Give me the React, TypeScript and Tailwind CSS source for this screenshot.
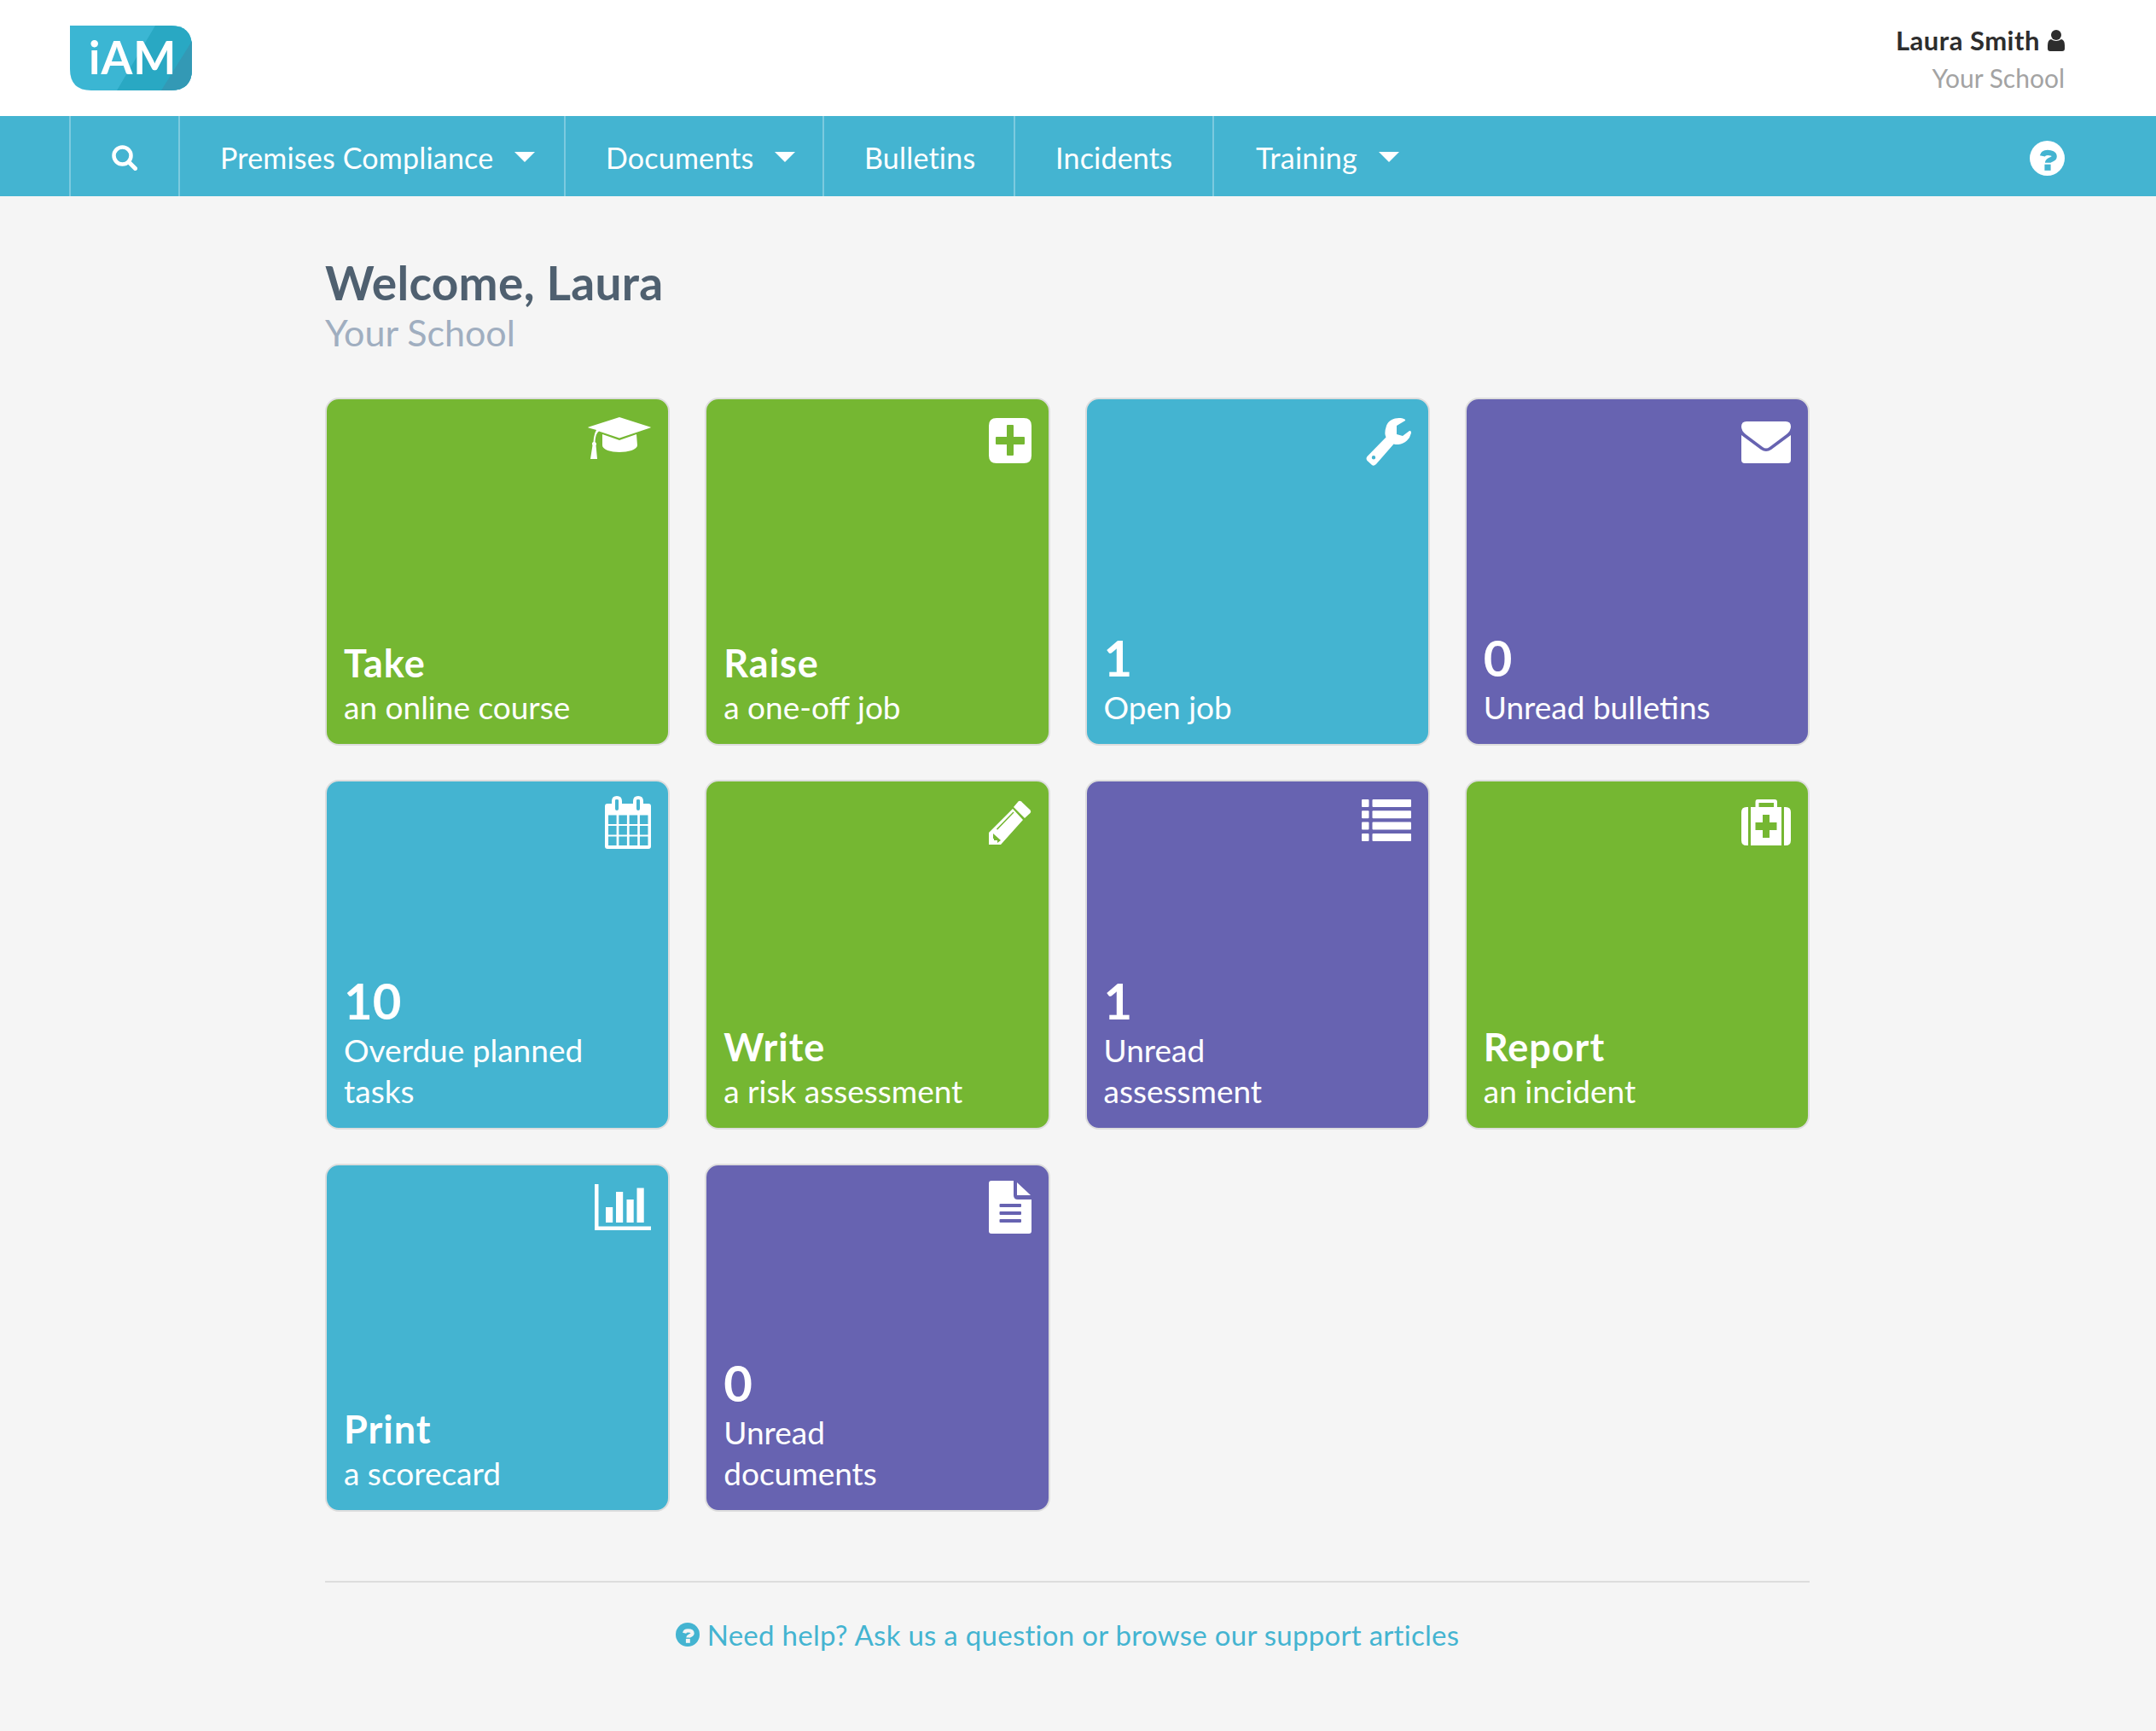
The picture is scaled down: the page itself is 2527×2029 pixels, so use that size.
import type { ReactNode } from "react";

const font = "font-['Lato','Open_Sans',sans-serif]";

function CapIcon() {
  return (
    <svg className="mt-[21px] h-[49px] w-[74px]" viewBox="0 0 74 49" fill="white">
      <path d="M37 0 L73 11.5 Q74.5 12 73 12.5 L37 24.5 L13 16.5 Q9 19 8.5 29 Q11 31 9.5 33 L11 49 H3 L5.5 33 Q4 30 6.5 29 Q7 20 10 15 L1 12.5 Q-0.5 12 1 11.5 Z" />
      <path d="M17 20 L37 27 L57 20 L58 33 C58 38 47 41 37 41 C27 41 17 38 17 33 Z" />
    </svg>
  );
}

function PlusIcon() {
  return (
    <svg className="mt-[22px] h-[53px] w-[50px]" viewBox="0 0 50 53" fill="white">
      <path
        fillRule="evenodd"
        d="M9 0 H41 Q50 0 50 9 V44 Q50 53 41 53 H9 Q0 53 0 44 V9 Q0 0 9 0 Z M21 9 V22 H9 Q8 22 8 23 V30 Q8 31 9 31 H21 V43 Q21 44 22 44 H28 Q29 44 29 43 V31 H41 Q42 31 42 30 V23 Q42 22 41 22 H29 V9 Q29 8 28 8 H22 Q21 8 21 9 Z"
      />
    </svg>
  );
}

function WrenchIcon() {
  return (
    <svg className="mt-[22px] h-[56px] w-[53px]" viewBox="0 0 53 56" fill="white">
      <path
        fillRule="evenodd"
        d="M46 3 L36 9 L36 19 L43 21 L51 15 Q53 14.5 53 17 A16.5 16.5 0 0 1 38 31 Q34 31 32.5 30.5 L12 54 Q9 57 7 55 L1.5 50 Q-0.5 47.5 1.5 45 L23.5 22.5 Q21 18 24 9 C27 1 38 -2 45.5 1.5 Q46.5 2.4 46 3 Z M9 44 A2.2 2.2 0 1 0 9 48.4 A2.2 2.2 0 1 0 9 44 Z"
      />
    </svg>
  );
}

function EnvelopeIcon() {
  return (
    <svg className="mt-[26px] h-[49px] w-[58px]" viewBox="0 0 58 49" fill="white">
      <path d="M6 0 H52 Q58 0 58 6 Q58 11 53 15 L33 30 Q29 33 25 30 L5 15 Q0 11 0 6 Q0 0 6 0 Z" />
      <path d="M0 16 L23 33 Q29 37 35 33 L58 16 V45 Q58 49 54 49 H4 Q0 49 0 45 Z" />
    </svg>
  );
}

function CalendarIcon() {
  const cells: string[] = [];
  [22.5, 35, 47.5].forEach((y) => {
    [4, 16.3, 28.6, 40.9].forEach((x) => {
      cells.push(`M${x} ${y} h9.6 v10.5 h-9.6 Z`);
    });
  });
  return (
    <svg className="mt-[17px] h-[62px] w-[54px]" viewBox="0 0 54 62" fill="white">
      <path
        fillRule="evenodd"
        d={`M3 9 H8 V6 Q8 0 14 0 Q20 0 20 6 V9 H33 V6 Q33 0 39 0 Q45 0 45 6 V9 H51 Q54 9 54 12 V59 Q54 62 51 62 H3 Q0 62 0 59 V12 Q0 9 3 9 Z M12 5 V15 Q12 17 14 17 Q16 17 16 15 V5 Q16 4 14 4 Q12 4 12 5 Z M37 5 V15 Q37 17 39 17 Q41 17 41 15 V5 Q41 4 39 4 Q37 4 37 5 Z ${cells.join(" ")}`}
      />
    </svg>
  );
}

function PencilIcon() {
  return (
    <svg className="mt-[22px] h-[53px] w-[50px]" viewBox="0 0 50 53" fill="white">
      <path d="M29 8 L34.5 1.5 Q36 0 38 1.5 L48.5 11.5 Q50 13.5 48.5 15 L42 21 Z" />
      <path
        fillRule="evenodd"
        d="M28 10 L40 23 L14 52 H0 V38 Z M9 33.5 L10 34.8 L29.5 14.5 L28.5 13.5 Z M5 39 L14 47 L10 50 V47 H6 V45 H5 Z"
      />
    </svg>
  );
}

function ListIcon() {
  return (
    <svg className="mt-[21px] h-[49px] w-[58px]" viewBox="0 0 58 49" fill="white">
      {[0, 13.3, 26.6, 40].map((y) => (
        <g key={y}>
          <rect x="0" y={y} width="8.5" height="9" rx="1" />
          <rect x="12.5" y={y} width="45.5" height="9" rx="1" />
        </g>
      ))}
    </svg>
  );
}

function MedkitIcon() {
  return (
    <svg className="mt-[21px] h-[54px] w-[58px]" viewBox="0 0 58 54" fill="white">
      <path
        fillRule="evenodd"
        d="M19 0 H39 Q42 0 42 3 V9 H47 V54 H11 V9 H16.5 V3 Q16.5 0 19 0 Z M20.5 4 V9 H38 V4 Z M25 18 V27 H16.5 V36 H25 V45 H33 V36 H41.5 V27 H33 V18 Z"
      />
      <path d="M8 9 V54 H6 Q0 54 0 48 V15 Q0 9 6 9 Z" />
      <path d="M50 9 V54 H52 Q58 54 58 48 V15 Q58 9 52 9 Z" />
    </svg>
  );
}

function ChartIcon() {
  return (
    <svg className="mt-[22px] h-[54px] w-[66px]" viewBox="0 0 66 54" fill="white">
      <path d="M0 0 H4.5 V49.5 H66 V54 H0 Z" />
      <rect x="13" y="27" width="8.2" height="18" />
      <rect x="25" y="9" width="8.2" height="36" />
      <rect x="37.5" y="18" width="8.2" height="27" />
      <rect x="49.5" y="4.5" width="8.2" height="40.5" />
    </svg>
  );
}

function DocIcon() {
  return (
    <svg className="mt-[18px] h-[62px] w-[50px]" viewBox="0 0 50 62" fill="white">
      <path
        fillRule="evenodd"
        d="M3 0 H29 V17 Q29 22 34 22 H50 V59 Q50 62 47 62 H3 Q0 62 0 59 V3 Q0 0 3 0 Z M13.5 27 Q12.5 27 12.5 28 V30 Q12.5 31 13.5 31 H37 Q38 31 38 30 V28 Q38 27 37 27 Z M13.5 36 Q12.5 36 12.5 37 V39 Q12.5 40 13.5 40 H37 Q38 40 38 39 V37 Q38 36 37 36 Z M13.5 45 Q12.5 45 12.5 46 V48 Q12.5 49 13.5 49 H37 Q38 49 38 48 V46 Q38 45 37 45 Z"
      />
      <path d="M33 2 L49 17 H33 Z" />
    </svg>
  );
}

function HelpCircle({ className, hole }: { className: string; hole: string }) {
  return (
    <svg className={className} viewBox="0 0 40 40">
      <circle cx="20" cy="20" r="20" fill="currentColor" />
      <path
        d="M14.5 17.5 C15 15 17 13.5 20.5 13.5 C24.5 13.5 28 15 28 18 C28 20.5 25.5 21 23.5 22 C21.5 23 20.5 23.5 20.5 25"
        fill="none"
        stroke={hole}
        strokeWidth="6"
      />
      <rect x="17" y="27" width="7" height="7" fill={hole} />
    </svg>
  );
}

function Caret() {
  return <span className="ml-[25px] h-0 w-0 border-x-[12px] border-t-[12px] border-x-transparent border-t-white" />;
}

function NavItem({ label, caret, className }: { label: string; caret?: boolean; className: string }) {
  return (
    <div className={`flex h-full items-center border-l-2 border-white/30 pt-[2px] pl-[47px] ${className}`}>
      <span>{label}</span>
      {caret && <Caret />}
    </div>
  );
}

type TileProps = {
  color: string;
  height: string;
  icon: ReactNode;
  title: string;
  big?: boolean;
  lines: string[];
};

function Tile({ color, height, icon, title, big, lines }: TileProps) {
  return (
    <div className={`flex flex-col rounded-[16px] border-2 border-[#dddddd] px-[20px] pb-[19px] text-white ${color} ${height}`}>
      <div className="flex justify-end">{icon}</div>
      <div className="mt-auto">
        <div className={big ? "mb-[2px] text-[58px] leading-[64px] font-bold" : "mb-[2px] text-[45px] leading-[52px] font-bold tracking-[1px]"}>{title}</div>
        {lines.map((line) => (
          <div key={line} className="text-[37px] leading-[48px]">
            {line}
          </div>
        ))}
      </div>
    </div>
  );
}

export default function App() {
  return (
    <div className={`min-h-[2029px] bg-[#f5f5f5] ${font}`}>
      <header className="flex h-[136px] items-start justify-between bg-white pr-[107px] pl-[82px]">
        <div className="relative mt-[30px] h-[76px] w-[143px]">
          <svg className="absolute inset-0 h-full w-full" viewBox="0 0 143 76">
            <path d="M0 0 H118 Q143 0 143 25 V51 Q143 76 118 76 H25 Q0 76 0 51 Z" fill="#3bb6d3" />
            <path d="M100 0 H118 Q143 0 143 25 V51 Q143 76 118 76 H55 Z" fill="#29a8c3" />
            <path d="M143 18 V51 Q143 76 118 76 H107 Z" fill="#3399b5" />
          </svg>
          <span className="absolute top-[2px] left-[22px] text-[53px] leading-[70px] font-bold tracking-[1px] text-white">iAM</span>
        </div>
        <div className="mt-[27px] text-right">
          <div className="flex items-center justify-end gap-[9px] text-[31px] leading-[40px] font-bold tracking-[0.5px] text-[#2d2d2d]">
            <span>Laura Smith</span>
            <svg className="h-[25px] w-[20px]" viewBox="0 0 20 25" fill="#2d2d2d">
              <circle cx="10" cy="6" r="6" />
              <path d="M4 11 Q10 15 16 11 Q20 12 20 18 V22 Q20 25 17 25 H3 Q0 25 0 22 V18 Q0 12 4 11 Z" />
            </svg>
          </div>
          <div className="mt-[4px] text-[30px] leading-[40px] text-[#a3a3a3]">Your School</div>
        </div>
      </header>

      <nav className="flex h-[94px] items-center bg-[#44b4d1] pr-[107px] pl-[81px] text-[34px] tracking-[0.2px] text-white">
        <div className="flex h-full w-[128px] items-center justify-center border-l-2 border-white/30 pt-[4px]">
          <svg className="h-[30px] w-[30px]" viewBox="0 0 30 30" fill="none" stroke="white">
            <circle cx="12.5" cy="12.5" r="10" strokeWidth="4.5" />
            <path d="M20 20 L27.5 27.5" strokeWidth="5" strokeLinecap="round" />
          </svg>
        </div>
        <NavItem label="Premises Compliance" caret className="w-[452px]" />
        <NavItem label="Documents" caret className="w-[303px]" />
        <NavItem label="Bulletins" className="w-[224px]" />
        <NavItem label="Incidents" className="w-[233px]" />
        <div className="flex h-full items-center border-l-2 border-white/30 pt-[2px] pl-[49px]">
          <span>Training</span>
          <Caret />
        </div>
        <HelpCircle className="mt-[4px] ml-auto h-[41px] w-[41px] text-white" hole="#44b4d1" />
      </nav>

      <main className="ml-[381px] w-[1740px]">
        <h1 className="mt-[70px] text-[55px] leading-[62px] font-bold tracking-[0.3px] text-[#4f6070]">Welcome, Laura</h1>
        <p className="text-[43px] leading-[56px] text-[#a0aec0]">Your School</p>

        <div className="mt-[48px] grid grid-cols-4 gap-x-[41px] gap-y-[40px]">
          <Tile color="bg-[#75b732]" height="h-[408px]" icon={<CapIcon />} title="Take" lines={["an online course"]} />
          <Tile color="bg-[#75b732]" height="h-[408px]" icon={<PlusIcon />} title="Raise" lines={["a one-off job"]} />
          <Tile color="bg-[#44b4d1]" height="h-[408px]" icon={<WrenchIcon />} title="1" big lines={["Open job"]} />
          <Tile color="bg-[#6763b1]" height="h-[408px]" icon={<EnvelopeIcon />} title="0" big lines={["Unread bulletins"]} />

          <Tile color="bg-[#44b4d1]" height="h-[410px]" icon={<CalendarIcon />} title="10" big lines={["Overdue planned", "tasks"]} />
          <Tile color="bg-[#75b732]" height="h-[410px]" icon={<PencilIcon />} title="Write" lines={["a risk assessment"]} />
          <Tile color="bg-[#6763b1]" height="h-[410px]" icon={<ListIcon />} title="1" big lines={["Unread", "assessment"]} />
          <Tile color="bg-[#75b732]" height="h-[410px]" icon={<MedkitIcon />} title="Report" lines={["an incident"]} />

          <Tile color="bg-[#44b4d1]" height="h-[408px]" icon={<ChartIcon />} title="Print" lines={["a scorecard"]} />
          <Tile color="bg-[#6763b1]" height="h-[408px]" icon={<DocIcon />} title="0" big lines={["Unread", "documents"]} />
        </div>

        <div className="mt-[81px] border-t-2 border-[#dddddd] pt-[41px]">
          <div className="flex items-center justify-center gap-[9px] text-[33px] leading-[40px] tracking-[0.28px] text-[#44b4d1]">
            <HelpCircle className="h-[28px] w-[28px] text-[#44b4d1]" hole="#f5f5f5" />
            <span>Need help? Ask us a question or browse our support articles</span>
          </div>
        </div>
      </main>
    </div>
  );
}
